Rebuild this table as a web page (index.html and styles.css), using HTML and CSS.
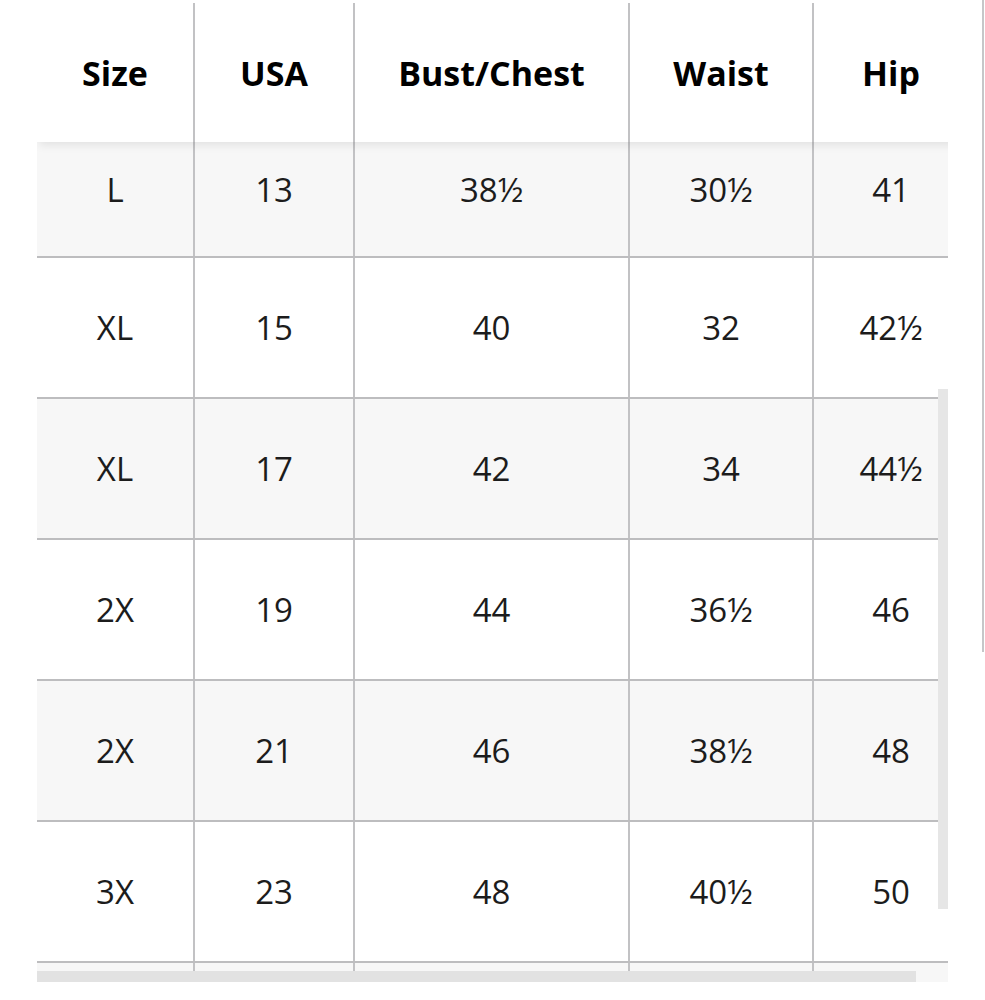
FILE: index.html
```html
<!DOCTYPE html>
<html lang="en">
<head>
<meta charset="utf-8">
<title>Size chart</title>
<link rel="stylesheet" href="styles.css">
</head>
<body>
<div class="page">
  <div class="viewport">
    <div class="row head">
      <div class="cell">Size</div>
      <div class="cell">USA</div>
      <div class="cell">Bust/Chest</div>
      <div class="cell">Waist</div>
      <div class="cell">Hip</div>
    </div>
    <div class="row alt first">
      <div class="cell">L</div>
      <div class="cell">13</div>
      <div class="cell">38½</div>
      <div class="cell">30½</div>
      <div class="cell">41</div>
    </div>
    <div class="row">
      <div class="cell">XL</div>
      <div class="cell">15</div>
      <div class="cell">40</div>
      <div class="cell">32</div>
      <div class="cell">42½</div>
    </div>
    <div class="row alt">
      <div class="cell">XL</div>
      <div class="cell">17</div>
      <div class="cell">42</div>
      <div class="cell">34</div>
      <div class="cell">44½</div>
    </div>
    <div class="row">
      <div class="cell">2X</div>
      <div class="cell">19</div>
      <div class="cell">44</div>
      <div class="cell">36½</div>
      <div class="cell">46</div>
    </div>
    <div class="row alt">
      <div class="cell">2X</div>
      <div class="cell">21</div>
      <div class="cell">46</div>
      <div class="cell">38½</div>
      <div class="cell">48</div>
    </div>
    <div class="row">
      <div class="cell">3X</div>
      <div class="cell">23</div>
      <div class="cell">48</div>
      <div class="cell">40½</div>
      <div class="cell">50</div>
    </div>
    <div class="row alt last">
      <div class="cell"></div>
      <div class="cell"></div>
      <div class="cell"></div>
      <div class="cell"></div>
      <div class="cell"></div>
    </div>
    <div class="vscroll"></div>
    <div class="hscroll"></div>
  </div>
  <div class="page-scroll"></div>
</div>
</body>
</html>
```

FILE: styles.css
```css
html, body {
  margin: 0;
  padding: 0;
  background: #ffffff;
}

.page {
  position: relative;
  width: 985px;
  height: 1000px;
  padding-top: 3px;
  box-sizing: border-box;
}

.viewport {
  position: relative;
  margin-left: 37px;
  width: 911px;
  height: 979px;
  overflow: hidden;
}

.row {
  display: grid;
  grid-template-columns: 158px 160px 275px 184px 156px;
  width: 933px;
  height: 141px;
  box-sizing: border-box;
  border-bottom: 2px solid #bdbdbf;
  background: #ffffff;
  font-family: "Open Sans", "Liberation Sans", sans-serif;
  font-size: 33px;
  font-weight: 400;
  color: #1c1c1c;
}

.row.alt {
  background: #f7f7f7;
}

.cell {
  display: flex;
  align-items: center;
  justify-content: center;
  border-right: 2px solid #c2c2c4;
  box-sizing: border-box;
}

.row.head {
  position: relative;
  z-index: 2;
  height: 139px;
  border-bottom: none;
  background: #ffffff;
  font-weight: 700;
  font-size: 34px;
  color: #000000;
  box-shadow: 0 5px 9px -2px rgba(0, 0, 0, 0.09);
}

.row.head .cell {
  padding-top: 1px;
}

.row.first {
  height: 116px;
}

.row.first .cell {
  padding-bottom: 20px;
}

.row.last {
  border-bottom: none;
}

.vscroll {
  position: absolute;
  right: 0;
  top: 386px;
  width: 10px;
  height: 520px;
  background: #e6e6e6;
}

.hscroll {
  position: absolute;
  left: 0;
  bottom: 0;
  width: 879px;
  height: 11px;
  background: #e2e2e2;
}

.page-scroll {
  position: absolute;
  right: 1px;
  top: 0;
  width: 2px;
  height: 652px;
  background: #c6c6c8;
}
```
